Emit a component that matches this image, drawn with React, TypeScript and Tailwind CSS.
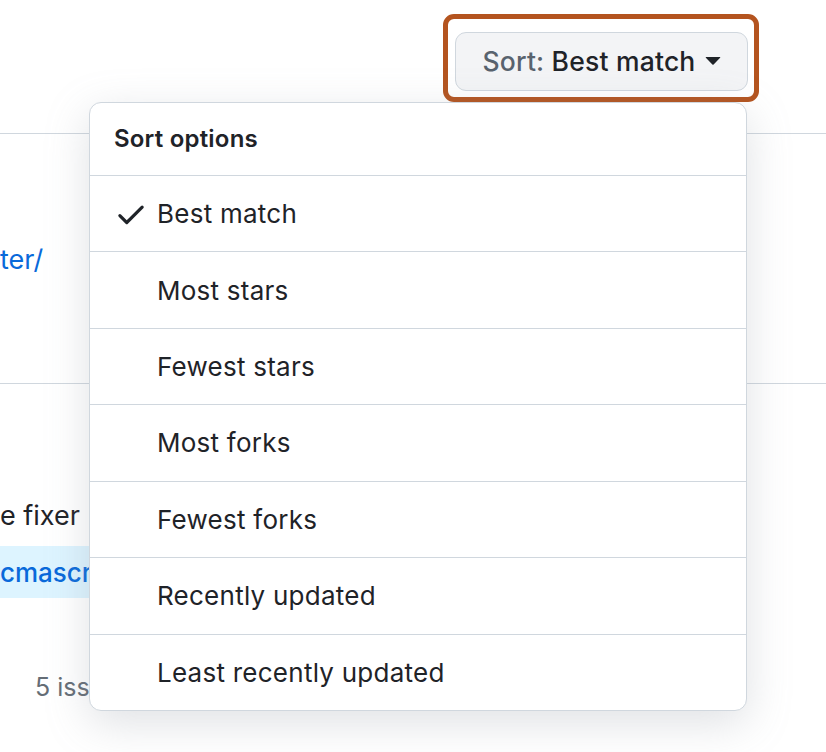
import React from 'react';

const options = [
  'Best match',
  'Most stars',
  'Fewest stars',
  'Most forks',
  'Fewest forks',
  'Recently updated',
  'Least recently updated',
];

const CheckIcon = () => (
  <svg viewBox="0 0 16 16" width="34" height="34" fill="#1f2328">
    <path d="M13.78 4.22a.75.75 0 0 1 0 1.06l-7.25 7.25a.75.75 0 0 1-1.06 0L2.22 9.28a.751.751 0 0 1 .018-1.042.751.751 0 0 1 1.042-.018L6 10.94l6.72-6.72a.75.75 0 0 1 1.06 0Z" />
  </svg>
);

const Caret = () => (
  <svg viewBox="4 7 8 4.5" width="16" height="9" fill="#1f2328">
    <path d="m4.427 7.427 3.396 3.396a.25.25 0 0 0 .354 0l3.396-3.396A.25.25 0 0 0 11.396 7H4.604a.25.25 0 0 0-.177.427Z" />
  </svg>
);

const App: React.FC = () => {
  return (
    <div className="relative w-[826px] h-[752px] overflow-hidden bg-white font-['Inter',sans-serif] text-[#1f2328]">
      {/* top bar with highlighted sort button */}
      <div className="h-[133px] flex justify-end items-start pt-[14px] pr-[67px]">
        <div className="border-[5px] border-[#b4541f] rounded-[11px] pt-[13px] pb-[6px] pl-[7px] pr-[6px]">
          <button className="h-[59px] w-[293px] flex items-center justify-center gap-[9px] bg-[#f3f4f6] border border-[#d0d7de] rounded-[11px] text-[26.5px] font-medium tracking-[0.2px]">
            <span>
              <span className="text-[#59636e]">Sort:</span> Best match
            </span>
            <Caret />
          </button>
        </div>
      </div>

      {/* results underneath, mostly covered by the menu */}
      <div className="flex flex-col">
        <div className="h-[250px] border-t border-[#d0d7de] pt-[106px]">
          <span className="text-[27px] text-[#0969da] leading-[40px]">ter/</span>
        </div>
        <div className="border-t border-[#d0d7de] pt-[112px]">
          <div className="text-[27px] leading-[40px]">e fixer</div>
          <div className="mt-[10px] h-[52px] w-[120px] bg-[#ddf4ff] flex items-center text-[26px] text-[#0969da] font-medium">
            cmascri
          </div>
          <div className="mt-[71px] pl-[35px] text-[25px] text-[#656d76] leading-[36px]">5 iss</div>
        </div>
      </div>

      {/* sort menu overlay */}
      <div className="absolute left-[89px] top-[102px] w-[658px] h-[609px] flex flex-col bg-white border border-[#d0d7de] rounded-[12px] shadow-[0_12px_44px_rgba(140,149,159,0.28)]">
        <div className="h-[72px] shrink-0 flex items-center px-6 text-[24px] font-semibold tracking-[0.2px]">Sort options</div>
        {options.map((opt, i) => (
          <div key={opt} className="flex-1 flex items-center border-t border-[#d0d7de] pl-6 gap-[9px] text-[26px] tracking-[0.25px]">
            <span className="w-[34px] h-[34px] flex items-center justify-center">{i === 0 && <CheckIcon />}</span>
            <span>{opt}</span>
          </div>
        ))}
      </div>
    </div>
  );
};

export default App;
